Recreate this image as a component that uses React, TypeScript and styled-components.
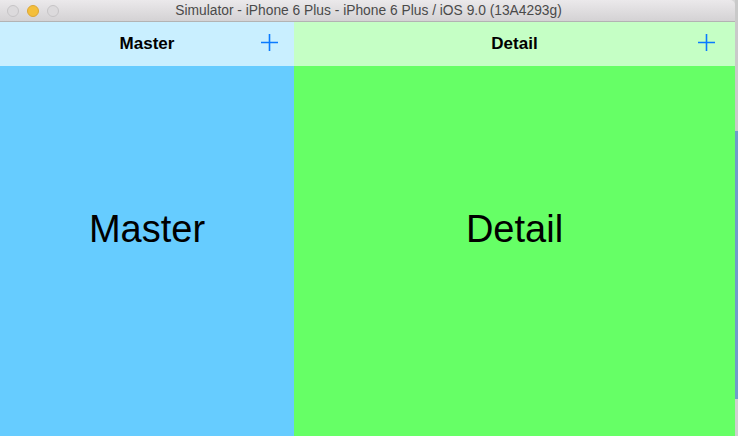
import React from 'react';
import styled, { createGlobalStyle } from 'styled-components';

const GlobalStyle = createGlobalStyle`
  html, body {
    margin: 0;
    padding: 0;
    background: #d6d6d6;
    overflow: hidden;
  }
`;

const Screen = styled.div`
  display: flex;
  width: 738px;
  height: 436px;
  overflow: hidden;
`;

const Window = styled.div`
  display: flex;
  flex-direction: column;
  width: 735px;
  height: 436px;
  border-top-right-radius: 5px;
  overflow: hidden;
`;

const DesktopStrip = styled.div`
  display: flex;
  flex-direction: column;
  width: 3px;
`;

const StripPart = styled.div<{ $h: number; $color: string }>`
  height: ${p => p.$h}px;
  flex-shrink: 0;
  background: ${p => p.$color};
`;

const TitleBar = styled.div`
  position: relative;
  display: flex;
  align-items: center;
  justify-content: center;
  height: 21px;
  flex-shrink: 0;
  background: linear-gradient(#ebe9eb, #d4d2d4);
  border-bottom: 1px solid #b3b3b3;
`;

const TrafficLights = styled.div`
  position: absolute;
  left: 7px;
  top: 5px;
  display: flex;
  gap: 8px;
`;

const Light = styled.div<{ $active?: boolean }>`
  box-sizing: border-box;
  width: 12px;
  height: 12px;
  border-radius: 50%;
  background: ${p => (p.$active ? '#f4bf3b' : '#dcdadc')};
  border: 1px solid ${p => (p.$active ? '#dca635' : '#c6c4c6')};
`;

const TitleText = styled.span`
  font-family: "Liberation Sans", Arial, sans-serif;
  font-size: 13.8px;
  color: #4a4a4a;
  margin-left: 2px;
`;

const Content = styled.div`
  display: flex;
  flex: 1;
`;

const Pane = styled.div<{ $width?: number; $bg: string }>`
  display: flex;
  flex-direction: column;
  ${p => (p.$width ? `width: ${p.$width}px; flex-shrink: 0;` : 'flex: 1;')}
  background: ${p => p.$bg};
`;

const NavBar = styled.div<{ $bg: string }>`
  position: relative;
  display: flex;
  align-items: center;
  justify-content: center;
  height: 44px;
  flex-shrink: 0;
  background: ${p => p.$bg};
`;

const NavTitle = styled.span`
  font-family: "Liberation Sans", Arial, sans-serif;
  font-weight: bold;
  font-size: 17px;
  color: #000;
`;

const AddButton = styled.button<{ $right: number }>`
  position: absolute;
  right: ${p => p.$right}px;
  top: 12px;
  width: 17px;
  height: 17px;
  padding: 0;
  border: none;
  background: none;
  display: flex;
`;

const PaneBody = styled.div`
  flex: 1;
  display: flex;
  justify-content: center;
  padding-top: 140px;
`;

const BigLabel = styled.span`
  font-family: "Liberation Sans", Arial, sans-serif;
  font-size: 38px;
  line-height: 46px;
  color: #000;
`;

const PlusIcon = () => (
  <svg width="17" height="17" viewBox="0 0 17 17">
    <path d="M8.5 0 V17 M0 8.5 H17" stroke="#0a7aff" strokeWidth="1.6" fill="none" />
  </svg>
);

const App: React.FC = () => {
  return (
    <Screen>
      <GlobalStyle />
      <Window>
        <TitleBar>
          <TrafficLights>
            <Light />
            <Light $active />
            <Light />
          </TrafficLights>
          <TitleText>Simulator - iPhone 6 Plus - iPhone 6 Plus / iOS 9.0 (13A4293g)</TitleText>
        </TitleBar>
        <Content>
          <Pane $width={294} $bg="#66ccff">
            <NavBar $bg="#c9efff">
              <NavTitle>Master</NavTitle>
              <AddButton $right={16}><PlusIcon /></AddButton>
            </NavBar>
            <PaneBody>
              <BigLabel>Master</BigLabel>
            </PaneBody>
          </Pane>
          <Pane $bg="#66ff66">
            <NavBar $bg="#c5ffc5">
              <NavTitle>Detail</NavTitle>
              <AddButton $right={20}><PlusIcon /></AddButton>
            </NavBar>
            <PaneBody>
              <BigLabel>Detail</BigLabel>
            </PaneBody>
          </Pane>
        </Content>
      </Window>
      <DesktopStrip>
        <StripPart $h={131} $color="#c9c9c9" />
        <StripPart $h={268} $color="#6d9cc9" />
        <StripPart $h={37} $color="#cfcfcf" />
      </DesktopStrip>
    </Screen>
  );
};

export default App;
